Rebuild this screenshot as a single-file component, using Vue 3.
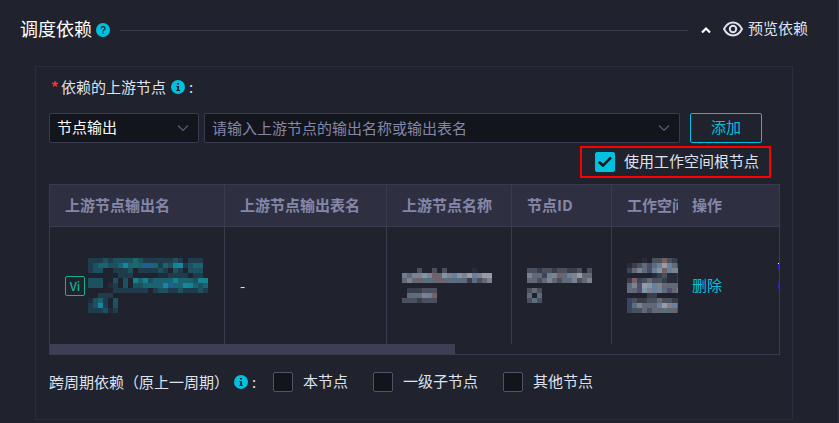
<template>
    <div class="page">
        <div class="section-head">
            <h2>调度依赖</h2>
            <svg class="tip" viewBox="0 0 14 14">
                <circle cx="7" cy="7" r="7" fill="#00c1de" />
                <path d="M5 5.6C5 3 9 3 9 5.4C9 6.8 7.1 6.8 7.1 8.4M7.1 9.6V10.8" fill="none" stroke="#20222e" stroke-width="1.2" />
            </svg>
            <span class="line"></span>
            <button type="button" class="fold" aria-label="收起" @click="open = !open">
                <svg viewBox="0 0 12 8" :class="{ closed: !open }">
                    <path d="M2 6.5L6 2.5L10 6.5" fill="none" stroke="#fff" stroke-width="2.2" />
                </svg>
            </button>
            <a href="#" class="preview">
                <svg viewBox="0 0 20 16">
                    <path d="M1 8C5.5-.6 14.5-.6 19 8C14.5 16.6 5.5 16.6 1 8Z" fill="none" stroke="#dfe2ee" stroke-width="2" />
                    <circle cx="10" cy="8" r="3.2" fill="none" stroke="#dfe2ee" stroke-width="2" />
                </svg>
                <span>预览依赖</span>
            </a>
        </div>

        <div class="panel" v-show="open">
            <div class="field-label">
                <span class="required">*</span>
                <label for="keyword">依赖的上游节点</label>
                <svg class="tip info" viewBox="0 0 14 14">
                    <circle cx="7" cy="7" r="7" fill="#00c1de" />
                    <path d="M6 3h2v1.6H6zM5.3 6H8v4h1v1H5.2v-1h1V7h-.9z" fill="#20222e" />
                </svg>
                <span>:</span>
            </div>

            <div class="search">
                <div class="control type">
                    <select v-model="type" aria-label="节点输出">
                        <option value="output">节点输出</option>
                    </select>
                    <svg class="arrow" viewBox="0 0 12 8"><path d="M1 1.5L6 6.5L11 1.5" /></svg>
                </div>
                <div class="control keyword">
                    <input id="keyword" type="text" v-model="keyword" placeholder="请输入上游节点的输出名称或输出表名">
                    <svg class="arrow" viewBox="0 0 12 8"><path d="M1 1.5L6 6.5L11 1.5" /></svg>
                </div>
                <button type="button" class="add">添加</button>
            </div>

            <div class="root-row">
                <label class="root">
                    <input type="checkbox" v-model="useRoot">
                    <span>使用工作空间根节点</span>
                </label>
            </div>

            <div class="table-box">
                <div class="table-scroll">
                    <table>
                        <colgroup>
                            <col class="c-out">
                            <col class="c-table">
                            <col class="c-name">
                            <col class="c-id">
                            <col>
                            <col class="c-action">
                        </colgroup>
                        <thead>
                            <tr>
                                <th>上游节点输出名</th>
                                <th>上游节点输出表名</th>
                                <th>上游节点名称</th>
                                <th>节点ID</th>
                                <th>工作空间</th>
                                <th class="action">操作</th>
                            </tr>
                        </thead>
                        <tbody>
                            <tr>
                                <td>
                                    <div class="output">
                                        <span class="vi">Vi</span>
                                        <svg class="mask" :width="masks.output.w" :height="masks.output.h">
                                            <rect v-for="(c, i) in masks.output.cells" :key="i" :x="c.x" :y="c.y" width="5" height="5" :fill="c.fill" />
                                        </svg>
                                    </div>
                                </td>
                                <td>-</td>
                                <td>
                                    <svg class="mask" :width="masks.name.w" :height="masks.name.h">
                                        <rect v-for="(c, i) in masks.name.cells" :key="i" :x="c.x" :y="c.y" width="5" height="5" :fill="c.fill" />
                                    </svg>
                                </td>
                                <td>
                                    <svg class="mask" :width="masks.id.w" :height="masks.id.h">
                                        <rect v-for="(c, i) in masks.id.cells" :key="i" :x="c.x" :y="c.y" width="5" height="5" :fill="c.fill" />
                                    </svg>
                                </td>
                                <td>
                                    <svg class="mask" :width="masks.space.w" :height="masks.space.h">
                                        <rect v-for="(c, i) in masks.space.cells" :key="i" :x="c.x" :y="c.y" width="5" height="5" :fill="c.fill" />
                                    </svg>
                                </td>
                                <td class="action"><a href="#">删除</a></td>
                            </tr>
                        </tbody>
                    </table>
                </div>
                <div class="scrollbar"><span></span></div>
                <svg class="edge" viewBox="0 0 1 28">
                    <path d="M0 0h1v1H0z" fill="#fff" />
                    <path d="M0 1h1v6H0zM0 20h1v6H0z" fill="#2a1fc4" />
                </svg>
            </div>

            <div class="cycle">
                <span class="cycle-label">跨周期依赖（原上一周期）</span>
                <svg class="tip info" viewBox="0 0 14 14">
                    <circle cx="7" cy="7" r="7" fill="#00c1de" />
                    <path d="M6 3h2v1.6H6zM5.3 6H8v4h1v1H5.2v-1h1V7h-.9z" fill="#20222e" />
                </svg>
                <span class="colon">:</span>
                <label v-for="item in cycles" :key="item.label">
                    <input type="checkbox" v-model="item.checked">
                    <span>{{ item.label }}</span>
                </label>
            </div>
        </div>
    </div>
</template>

<script setup>
import { ref } from 'vue'

const open = ref(true)
const type = ref('output')
const keyword = ref('')
const useRoot = ref(true)

const cycles = ref([
    { label: '本节点', checked: false },
    { label: '一级子节点', checked: false },
    { label: '其他节点', checked: false },
])

const teal = {
    a: '#1f2c3d', b: '#1f3c4c', c: '#1c5160', d: '#1a6472',
    e: '#16818f', f: '#1486a6', g: '#1b6a68', h: '#1c6190',
}

const gray = {
    a: '#282b39', b: '#3a3e4b', c: '#4b505e', d: '#636876',
    e: '#7d8291', f: '#999ba2', g: '#68809c', h: '#785f62',
    i: '#3b4560', j: '#7e98a3', k: '#534d70', l: '#5a6e80',
}

// hidden values are drawn as 5px blocks, '.' is an empty block
const buildMask = (rows, colors) => {
    const cells = []
    rows.forEach((row, y) => {
        row.split('').forEach((key, x) => {
            if (key !== '.') cells.push({ x: x * 5, y: y * 5, fill: colors[key] })
        })
    })
    return { w: rows[0].length * 5, h: rows.length * 5, cells }
}

const masks = {
    output: buildMask([
        'bbbcbccccgcbbbbbbcb.bbb.',
        'bcddccdfdgdhhdbdcefbcdd.',
        'bcc..bbbc.bbbbcb.cb.ccc.',
        '......bbb.....aabbbb.bb.',
        'ccc..c.c.edecddddedddcee',
        'ccc.ab.c.ccddddfhddfedcd',
        '.....bbbbbbb.bccbbcbbbcb',
        '..bbb...................',
        'acdb.c..................',
        'bcfb.c..................',
        'bbbcab..................',
    ], teal),
    name: buildMask([
        '...c..c.c.....a...',
        'gdeejehdjegjefgeff',
        'dedhlldhdllldblcde',
        '..................',
        '.bbbccc...........',
        '.dllegh...........',
        'cccbccc...........',
    ], gray),
    id: buildMask([
        'ccbccbccbbc.c',
        'eddigehdgefdd',
        'ddcdedcdlecde',
        '.............',
        'cdc..........',
        'd.d..........',
        'clc..........',
    ], gray),
    space: buildMask([
        '...a.cchcba',
        'abcdclgfglc',
        'idelcgjhgee',
        '.....abcaab',
        'bhicdccbaab',
        'lekfjgedddl',
        'ldkjegelkde',
        '....bb.....',
        'icbbccdccbb',
        'ilelddgfegh',
        'iccdcddlddc',
    ], gray),
}
</script>

<style>
body {
    margin: 0;
    background: #20222e;
}
</style>

<style scoped>
* {
    box-sizing: border-box;
}

.page {
    min-height: 100vh;
    padding: 15px 30px 2px 20px;
    border-right: 1px solid #303243;
    background: #20222e;
    color: #dfe2ee;
    font-family: "Noto Sans CJK SC", sans-serif;
    font-size: 15px;
    line-height: 24px;
}

a {
    color: #00c1de;
    text-decoration: none;
}

button,
input,
select {
    font: inherit;
}

.section-head {
    display: flex;
    align-items: center;
    height: 26px;
}

h2 {
    margin: 0;
    color: #fff;
    font-size: 18px;
    font-weight: 400;
}

.tip {
    flex: none;
    width: 14px;
    height: 14px;
    margin: 4px 0 0 4px;
}

.line {
    flex: 1;
    height: 1px;
    margin: 4px 12px 0 10px;
    background: #373948;
}

.fold {
    display: flex;
    padding: 0;
    border: none;
    background: none;
    cursor: pointer;
}

.fold svg {
    width: 12px;
    height: 8px;
    margin-top: 4px;
}

.fold .closed {
    transform: rotate(180deg);
}

.preview {
    display: flex;
    align-items: center;
    gap: 5px;
    margin-left: 11px;
    color: #dfe2ee;
}

.preview svg {
    width: 20px;
    height: 16px;
    margin-top: 2px;
}

.panel {
    margin: 25px 15px 0 15px;
    padding: 8px 12px 24px 13px;
    border: 1px solid #2b2d3c;
}

.field-label {
    display: flex;
    align-items: center;
    height: 24px;
    padding-left: 2px;
}

.required {
    width: 10px;
    color: #f33;
    font-weight: 700;
}

.field-label .tip {
    margin: 0 4px 0 5px;
}

.search {
    display: flex;
    height: 30px;
    margin: 14px 18px 0 0;
}

.control {
    position: relative;
    border: 1px solid #393b4e;
    border-radius: 2px;
    background: #12151c;
}

.type {
    flex: none;
    width: 150px;
    margin-right: 5px;
}

.keyword {
    flex: 1;
    margin-right: 10px;
}

.control select,
.control input {
    display: block;
    width: 100%;
    height: 28px;
    padding: 0 30px 2px 7px;
    border: none;
    outline: none;
    appearance: none;
    background: transparent;
    color: #fff;
}

.control input::placeholder {
    color: #8587a8;
    opacity: 1;
}

.arrow {
    position: absolute;
    top: 10px;
    right: 9px;
    width: 12px;
    height: 8px;
    fill: none;
    stroke: #5a5c74;
    stroke-width: 1.2;
    pointer-events: none;
}

.add {
    flex: none;
    width: 72px;
    padding: 0 0 2px;
    border: 1px solid #00c1de;
    border-radius: 2px;
    background: transparent;
    color: #00c1de;
    cursor: pointer;
}

.root-row {
    display: flex;
    justify-content: flex-end;
    margin: 3px 9px 0 0;
}

.root {
    display: flex;
    align-items: center;
    gap: 9px;
    height: 32px;
    padding: 0 10px 0 13px;
    border: 2px solid #f00;
}

label span {
    padding-bottom: 2px;
}

input[type="checkbox"] {
    display: grid;
    place-content: center;
    flex: none;
    width: 20px;
    height: 20px;
    margin: 0;
    border: 1px solid #515269;
    border-radius: 2px;
    appearance: none;
    background: #12151c;
}

input[type="checkbox"]:checked {
    border-color: #00c1de;
    background: #00c1de;
}

input[type="checkbox"]:checked::before {
    content: '';
    width: 14px;
    height: 14px;
    background: #12151c;
    clip-path: polygon(0 56%, 13% 42%, 36% 62%, 87% 10%, 100% 24%, 36% 88%);
}

.table-box {
    position: relative;
    margin-top: 6px;
    border: 1px solid #393b4e;
}

.table-scroll {
    overflow: hidden;
}

table {
    width: 100%;
    min-width: 1315px;
    border-collapse: separate;
    border-spacing: 0;
    table-layout: fixed;
}

.c-out {
    width: 175px;
}

.c-table {
    width: 162px;
}

.c-name {
    width: 125px;
}

.c-id {
    width: 100px;
}

.c-action {
    width: 101px;
}

th,
td {
    padding: 0 15px;
    border-right: 1px solid #393b4e;
    text-align: left;
    white-space: nowrap;
}

th {
    height: 42px;
    padding-bottom: 2px;
    border-bottom: 1px solid #393b4e;
    background: #2e3042;
    color: #8587a8;
    font-weight: 700;
}

td {
    height: 117px;
    background: #20222e;
}

.action {
    position: sticky;
    right: 0;
    padding-bottom: 2px;
    padding-left: 14px;
    border-right: none;
}

.output {
    display: flex;
    align-items: center;
    gap: 3px;
}

.vi {
    flex: none;
    width: 20px;
    height: 20px;
    border: 1px solid #13b590;
    border-radius: 2px;
    color: #13b590;
    font-size: 12px;
    font-weight: 500;
    line-height: 18px;
    text-align: center;
}

.mask {
    display: block;
    shape-rendering: crispEdges;
}

.scrollbar {
    height: 10px;
}

.scrollbar span {
    display: block;
    width: calc(100% * 5 / 9);
    height: 10px;
    background: #3e3f55;
}

.edge {
    position: absolute;
    top: 78px;
    right: 0;
    width: 1px;
    height: 28px;
}

.cycle {
    display: flex;
    align-items: center;
    margin-top: 14px;
}

.cycle .tip {
    margin: 0 4px 0 5px;
}

.colon {
    width: 21px;
}

.cycle label {
    display: flex;
    align-items: center;
    gap: 10px;
    margin-right: 25px;
}
</style>
